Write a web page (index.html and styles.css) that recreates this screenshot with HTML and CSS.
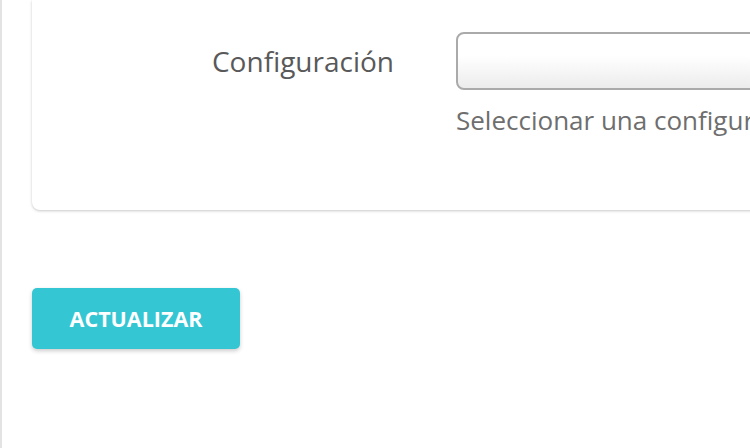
FILE: index.html
```html
<!DOCTYPE html>
<html lang="es">
<head>
<meta charset="utf-8">
<title>Configuración</title>
<link rel="stylesheet" href="styles.css">
</head>
<body>
<div class="page">
  <div class="card">
    <div class="form-row">
      <label class="label" for="cfg">Configuración</label>
      <div class="field">
        <select class="select" id="cfg"></select>
        <p class="hint">Seleccionar una configuración</p>
      </div>
    </div>
  </div>
  <div class="actions">
    <button class="btn" type="button">ACTUALIZAR</button>
  </div>
</div>
</body>
</html>
```
FILE: styles.css
```css
html, body {
  margin: 0;
  padding: 0;
  height: 100%;
  overflow: hidden;
  background: #ffffff;
}
body {
  font-family: "Open Sans", "Liberation Sans", sans-serif;
}
.page {
  height: 448px;
  border-left: 2px solid #e3e3e3;
  padding-left: 30px;
  box-sizing: border-box;
  overflow: hidden;
}
.card {
  background: #fff;
  border-radius: 0 0 0 8px;
  box-shadow: 0 1px 3px rgba(0,0,0,0.22);
  padding: 32px 0 0 0;
  height: 210px;
  box-sizing: border-box;
  margin-right: -20px;
}
.form-row {
  display: flex;
  align-items: flex-start;
}
.label {
  width: 424px;
  flex: none;
  text-align: right;
  padding-right: 62px;
  box-sizing: border-box;
  font-size: 28px;
  line-height: 58px;
  color: #595959;
}
.field {
  flex: 1;
  min-width: 0;
}
.select {
  display: block;
  width: 400px;
  height: 58px;
  border: 2px solid #aaa;
  border-radius: 8px;
  background: linear-gradient(#ffffff 0%, #ffffff 40%, #ececec 100%);
  box-sizing: border-box;
  appearance: none;
  -webkit-appearance: none;
  margin: 0;
}
.hint {
  margin: 12px 0 0 0;
  font-size: 26px;
  line-height: 36px;
  color: #6e6e6e;
  white-space: nowrap;
}
.actions {
  padding-top: 78px;
}
.btn {
  width: 208px;
  height: 61px;
  background: #34c6d3;
  border: none;
  border-radius: 5px;
  color: #fff;
  font-family: "Open Sans", "Liberation Sans", sans-serif;
  font-weight: 700;
  font-size: 21.5px;
  box-shadow: 0 2px 4px rgba(0,0,0,0.2);
  padding: 0;
}
```
